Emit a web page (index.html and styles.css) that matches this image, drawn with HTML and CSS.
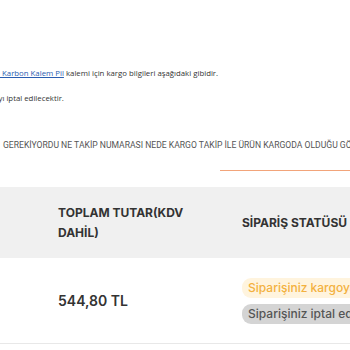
FILE: index.html
```html
<!DOCTYPE html>
<html lang="tr">
<head>
<meta charset="utf-8">
<link rel="stylesheet" href="styles.css">
</head>
<body>
<div class="page">
  <p class="note note-first"><a class="link" href="#">&nbsp;Karbon Kalem Pil</a> kalemi için kargo bilgileri aşağıdaki gibidir.</p>
  <p class="note note-second">yı iptal edilecektir.</p>
  <p class="complaint">GEREKİYORDU NE TAKİP NUMARASI NEDE KARGO TAKİP İLE ÜRÜN KARGODA OLDUĞU GÖRÜNÜYOR</p>
  <div class="accent-line"></div>
  <div class="table">
    <div class="row head">
      <div class="cell">TOPLAM TUTAR(KDV DAHİL)</div>
      <div class="cell">SİPARİŞ STATÜSÜ</div>
    </div>
    <div class="row body">
      <div class="cell price">544,80 TL</div>
      <div class="cell statuses">
        <span class="badge badge-ship">Siparişiniz kargoya verildi</span>
        <span class="badge badge-cancel">Siparişiniz iptal edildi</span>
      </div>
    </div>
  </div>
</div>
</body>
</html>
```
FILE: styles.css
```css
html, body {
  margin: 0;
  padding: 0;
  background: #fff;
}
.page {
  width: 350px;
  height: 350px;
  overflow: hidden;
  padding-top: 68px;
  box-sizing: border-box;
}
.note {
  margin: 0;
  font-family: "Open Sans", sans-serif;
  font-size: 7.8px;
  line-height: 10px;
  color: #333;
  white-space: nowrap;
}
.note-second {
  margin-top: 15px;
  text-indent: -1.5px;
}
.link {
  color: #2a5db0;
  text-decoration: underline;
}
.complaint {
  margin: 37px 0 0 3px;
  font-family: Roboto, sans-serif;
  font-size: 8.6px;
  line-height: 10px;
  color: #555;
  white-space: nowrap;
}
.accent-line {
  margin: 20px 0 0 220px;
  height: 0;
  border-top: 1px solid #f2a47a;
}
.table {
  margin-top: 16px;
  font-family: Inter, sans-serif;
}
.row {
  display: grid;
  grid-template-columns: 184px 1fr;
  padding-left: 58px;
  align-items: center;
}
.head {
  height: 71px;
  background: #f0f0f0;
  font-size: 12px;
  font-weight: 700;
  line-height: 19.2px;
  color: #333;
}
.head .cell:first-child {
  width: 130px;
}
.body {
  height: 86px;
  border-bottom: 1px solid #e8e8e8;
  box-sizing: border-box;
}
.price {
  font-size: 14px;
  font-weight: 600;
  color: #333;
}
.statuses {
  display: flex;
  flex-direction: column;
  gap: 6px;
  white-space: nowrap;
}
.badge {
  display: block;
  width: max-content;
  padding: 3px 6px;
  border-radius: 9px;
  font-size: 12px;
  line-height: 14px;
  font-weight: 500;
}
.badge-ship {
  background: #fff4de;
  color: #f3b13f;
}
.badge-cancel {
  background: #d4d4d4;
  color: #555;
}
```
